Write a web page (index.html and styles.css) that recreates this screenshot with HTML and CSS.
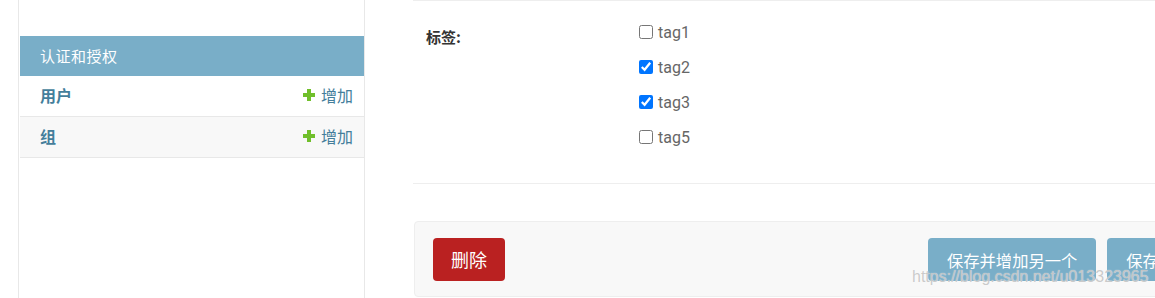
FILE: index.html
```html
<!DOCTYPE html>
<html lang="zh-CN">
<head>
<meta charset="utf-8">
<title>修改</title>
<link rel="stylesheet" href="styles.css">
</head>
<body>
<div class="page">
  <nav class="sidebar">
    <div class="module">
      <div class="caption">认证和授权</div>
      <div class="model-row">
        <a class="model-name">用户</a>
        <a class="addlink"><svg class="plus" viewBox="0 0 12 12" width="12" height="12"><rect x="4" y="0" width="4" height="12" fill="#70bf2b"/><rect x="0" y="4" width="12" height="4" fill="#70bf2b"/></svg>增加</a>
      </div>
      <div class="model-row alt">
        <a class="model-name">组</a>
        <a class="addlink"><svg class="plus" viewBox="0 0 12 12" width="12" height="12"><rect x="4" y="0" width="4" height="12" fill="#70bf2b"/><rect x="0" y="4" width="12" height="4" fill="#70bf2b"/></svg>增加</a>
      </div>
    </div>
  </nav>
  <main class="content">
    <div class="form-row">
      <label class="field-label">标签:</label>
      <ul class="checks">
        <li><input type="checkbox"><span>tag1</span></li>
        <li><input type="checkbox" checked><span>tag2</span></li>
        <li><input type="checkbox" checked><span>tag3</span></li>
        <li><input type="checkbox"><span>tag5</span></li>
      </ul>
    </div>
    <div class="submit-row">
      <a class="deletelink">删除</a>
      <div class="save-group">
        <button class="btn">保存并增加另一个</button>
        <button class="btn">保存并继续编辑</button>
      </div>
    </div>
  </main>
</div>
<div class="watermark">https://blog.csdn.net/u013323965</div>
</body>
</html>
```
FILE: styles.css
```css
html, body {
  margin: 0;
  padding: 0;
  background: #fff;
  overflow: hidden;
  height: 298px;
}
body {
  font-family: Roboto, "Noto Sans CJK SC", sans-serif;
  color: #333;
  position: relative;
}
.page {
  display: flex;
  width: 1500px;
  height: 298px;
}
.sidebar {
  margin-left: 18px;
  width: 344px;
  padding-left: 1px;
  padding-top: 36px;
  border-left: 1px solid #e8e8e8;
  border-right: 1px solid #e8e8e8;
  flex: none;
}
.caption {
  height: 40px;
  line-height: 40px;
  background: #79aec8;
  color: #fff;
  font-size: 15px;
  letter-spacing: 0.5px;
  padding-left: 20px;
  font-family: "Noto Sans CJK SC", sans-serif;
}
.model-row {
  height: 40px;
  border-bottom: 1px solid #e8e8e8;
  display: flex;
  align-items: center;
  justify-content: space-between;
  padding: 0 11px 0 20px;
  font-family: "Noto Sans CJK SC", sans-serif;
  font-size: 16px;
  color: #447e9b;
}
.model-row.alt {
  background: #f8f8f8;
}
.model-name {
  font-weight: bold;
  margin-top: -2px;
}
.addlink {
  display: flex;
  align-items: center;
  gap: 6px;
  margin-top: -2px;
}
.plus {
  display: block;
}
.content {
  padding-left: 48px;
  flex: 1;
}
.form-row {
  display: flex;
  align-items: flex-start;
  border-top: 1px solid #eeeeee;
  border-bottom: 1px solid #eeeeee;
  padding: 14px 0 28px 13px;
}
.field-label {
  width: 213px;
  margin-top: 12px;
  line-height: 20px;
  font-size: 15px;
  font-weight: bold;
  color: #333;
  font-family: "Noto Sans CJK SC", sans-serif;
}
.checks {
  list-style: none;
  margin: 0;
  padding: 0;
}
.checks li {
  height: 35px;
  display: flex;
  align-items: center;
  gap: 5px;
  font-size: 16px;
  color: #666;
}
.checks input {
  margin: -2px 0 0 0;
  width: 14px;
  height: 14px;
}
.submit-row {
  margin: 37px 0 0 1px;
  border: 1px solid #eeeeee;
  border-radius: 4px;
  background: #f8f8f8;
  padding: 16px 0 15px 18px;
  display: flex;
  align-items: center;
}
.deletelink {
  height: 43px;
  line-height: 43px;
  padding: 0 18px;
  background: #ba2121;
  color: #fff;
  border-radius: 4px;
  font-size: 18px;
  font-family: "Noto Sans CJK SC", sans-serif;
}
.save-group {
  margin-left: 423px;
  display: flex;
  gap: 11px;
}
.btn {
  height: 43px;
  padding: 0 19px;
  border: none;
  border-radius: 4px;
  background: #79aec8;
  color: #fff;
  font-size: 16.3px;
  font-family: "Noto Sans CJK SC", sans-serif;
}
.watermark {
  position: absolute;
  left: 912px;
  top: 268px;
  font-family: "Liberation Sans", Arial, sans-serif;
  font-size: 16px;
  color: rgba(185, 185, 185, 0.75);
  text-shadow: 0 0 1px rgba(255, 255, 255, 0.9);
  white-space: nowrap;
  pointer-events: none;
}
```
